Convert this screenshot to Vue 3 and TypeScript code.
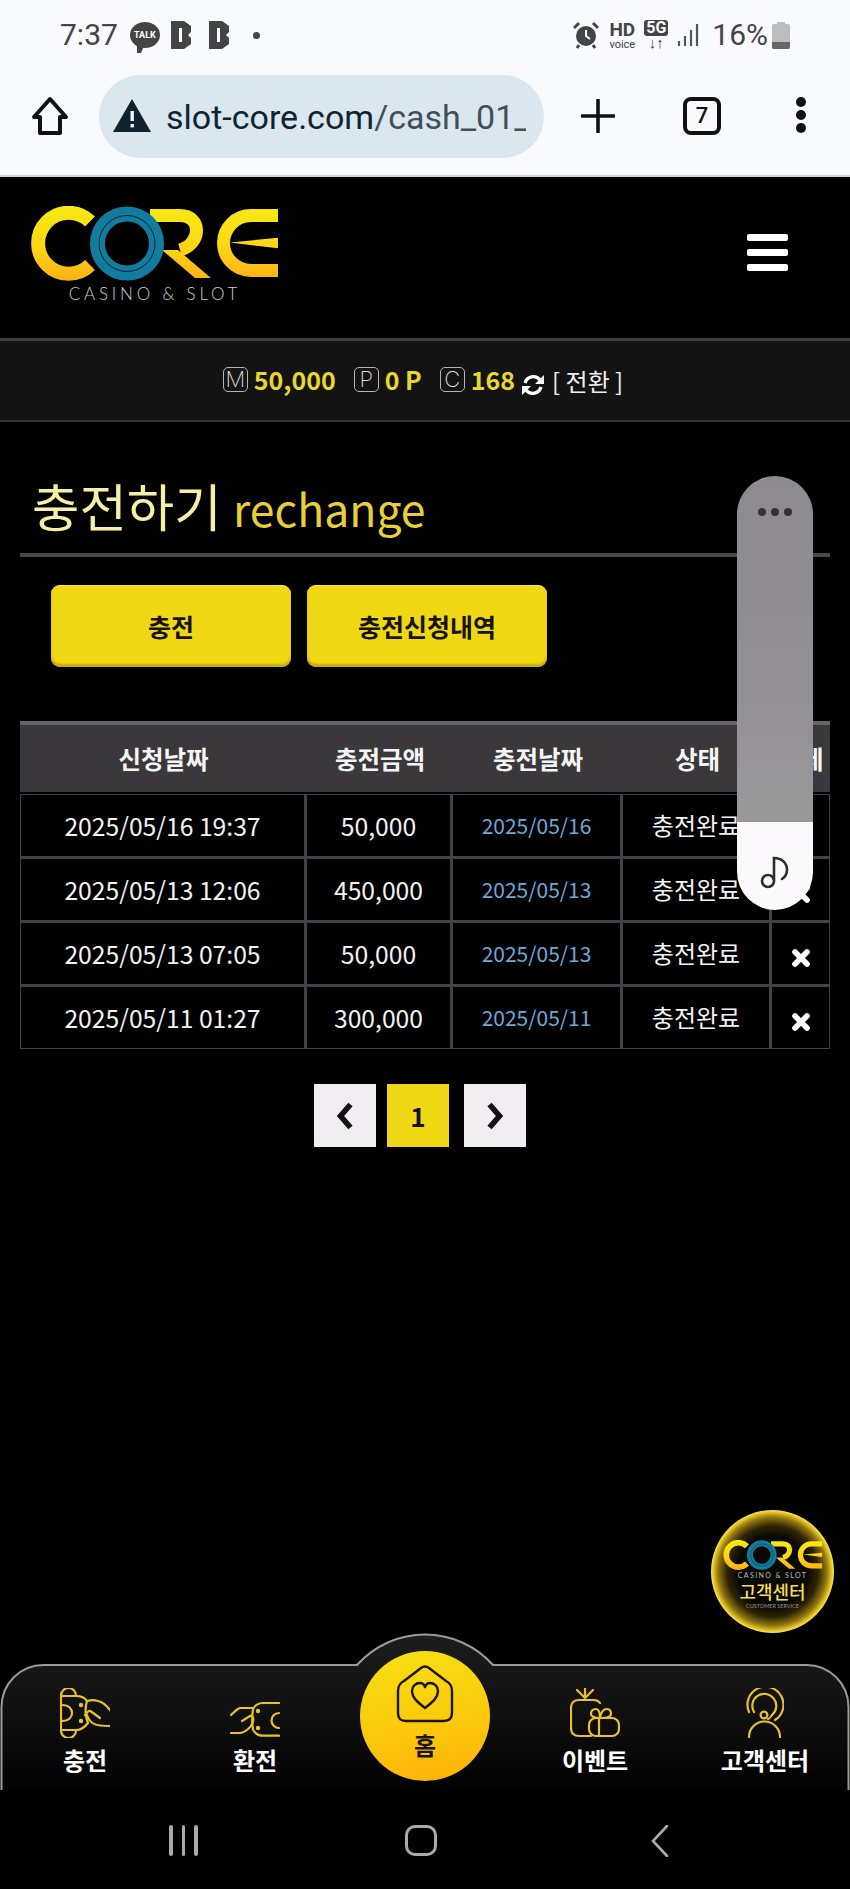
<script setup lang="ts">
interface ChargeRow {
  requested: string;
  amount: string;
  charged: string;
  status: string;
}

const rows: ChargeRow[] = [
  { requested: '2025/05/16 19:37', amount: '50,000', charged: '2025/05/16', status: '충전완료' },
  { requested: '2025/05/13 12:06', amount: '450,000', charged: '2025/05/13', status: '충전완료' },
  { requested: '2025/05/13 07:05', amount: '50,000', charged: '2025/05/13', status: '충전완료' },
  { requested: '2025/05/11 01:27', amount: '300,000', charged: '2025/05/11', status: '충전완료' },
];

const balances = [
  { mark: 'M', value: '50,000' },
  { mark: 'P', value: '0 P' },
  { mark: 'C', value: '168' },
];
</script>

<template>
  <div class="page">
    <div class="status">
      <div class="status-left">
        <span class="clock">7:37</span>
        <span class="talk">TALK</span>
        <svg class="b-icon" viewBox="0 0 22 28"><path d="M1 0H14L21 5V11L18 14L21 17V23L14 28H1Z" fill="#444" /><rect x="9" y="7" width="3" height="14" fill="#f8fafe" /></svg>
        <svg class="b-icon second" viewBox="0 0 22 28"><path d="M1 0H14L21 5V11L18 14L21 17V23L14 28H1Z" fill="#444" /><rect x="9" y="7" width="3" height="14" fill="#f8fafe" /></svg>
        <span class="dot"></span>
      </div>
      <div class="status-right">
        <svg class="alarm" viewBox="0 0 26 28">
          <circle cx="13" cy="15" r="10" fill="#444" />
          <path d="M13 9V15L17 18" fill="none" stroke="#f8fafe" stroke-width="2" />
          <path d="M1 7L6 2M25 7L20 2M6 24L4 27M20 24L22 27" stroke="#444" stroke-width="3" />
        </svg>
        <span class="hd"><b>HD</b><i>voice</i></span>
        <span class="fiveg"><b>5G</b><i>↓↑</i></span>
        <svg class="signal" viewBox="0 0 22 24"><path d="M2 18V23M8 13V23M14 7V23M20 1V23" stroke="#555" stroke-width="2.2" /></svg>
        <span class="percent">16%</span>
        <svg class="battery" viewBox="0 0 18 27"><path d="M5 0H13V2H16Q18 2 18 4V25Q18 27 16 27H2Q0 27 0 25V4Q0 2 2 2H5Z" fill="#bdbdbd" /><path d="M0 20H18V25Q18 27 16 27H2Q0 27 0 25Z" fill="#666" /></svg>
      </div>
    </div>

    <div class="browser">
      <svg class="home-glyph" viewBox="0 0 38 40">
        <path d="M19 3L35 21H29V37H9V21H3Z" fill="none" stroke="#111" stroke-width="4" stroke-linejoin="round" />
      </svg>
      <div class="url">
        <svg class="warn" viewBox="0 0 38 33">
          <path d="M19 0L38 33H0Z" fill="#10222e" />
          <rect x="17.5" y="12" width="3.4" height="10" fill="#f0f4f6" />
          <rect x="17.5" y="25" width="3.4" height="3.4" fill="#f0f4f6" />
        </svg>
        <span class="url-text"><b>slot-core.com</b>/cash_01_1</span>
      </div>
      <svg class="plus" viewBox="0 0 34 34"><path d="M17 1V33M1 17H33" stroke="#111" stroke-width="3.6" stroke-linecap="round" /></svg>
      <span class="tabs">7</span>
      <span class="kebab"><i></i><i></i><i></i></span>
    </div>

    <header class="site-head">
      <div class="brand">
        <svg class="core-logo" viewBox="0 0 250 75">
          <defs>
            <linearGradient id="coreGold" gradientUnits="userSpaceOnUse" x1="0" y1="0" x2="0" y2="75">
              <stop offset="0" stop-color="#f8ea12" />
              <stop offset="0.55" stop-color="#fbd615" />
              <stop offset="1" stop-color="#fdb014" />
            </linearGradient>
            <symbol id="coreMark" viewBox="0 0 250 75">
              <g fill="none" stroke="url(#coreGold)" stroke-width="13">
                <path d="M60 15.5A30.5 30.5 0 1 0 60 59" stroke-width="14" />
                <path d="M120 9.5H150C172 9.5 172 38 150 44" />
                <path d="M248 9.5H221A27.5 27.5 0 0 0 221 64.5H248" />
              </g>
              <path d="M132 44H148L181 72H165Z" fill="url(#coreGold)" />
              <path d="M200 36.5L248 31.7V42.3Z" fill="url(#coreGold)" />
              <circle cx="97" cy="37.5" r="29.5" fill="none" stroke="#127c9e" stroke-width="15" />
              <circle cx="97" cy="37.5" r="28" fill="none" stroke="#07222c" stroke-width="1" />
            </symbol>
          </defs>
          <use href="#coreMark" />
        </svg>
        <span class="brand-sub">CASINO &amp; SLOT</span>
      </div>
      <div class="burger"><i></i><i></i><i></i></div>
    </header>

    <div class="balance">
      <span v-for="b in balances" :key="b.mark" class="balance-item">
        <span class="mark">{{ b.mark }}</span>
        <strong>{{ b.value }}</strong>
      </span>
      <svg class="refresh" viewBox="0 0 24 24">
        <path d="M4 10A8.5 8.5 0 0 1 19 7M20 14A8.5 8.5 0 0 1 5 17" fill="none" stroke="#fff" stroke-width="3.4" />
        <path d="M23 2V11H14ZM1 22V13H10Z" fill="#fff" />
      </svg>
      <span class="swap">[ 전환 ]</span>
    </div>

    <main class="content">
      <h1 class="title">충전하기 <span>rechange</span></h1>
      <div class="tab-buttons">
        <button class="tab-btn">충전</button>
        <button class="tab-btn">충전신청내역</button>
      </div>

      <table class="history">
        <colgroup>
          <col style="width: 287px" />
          <col style="width: 146px" />
          <col style="width: 170px" />
          <col style="width: 149px" />
          <col style="width: 58px" />
        </colgroup>
        <thead>
          <tr>
            <th>신청날짜</th>
            <th>충전금액</th>
            <th>충전날짜</th>
            <th>상태</th>
            <th>삭제</th>
          </tr>
        </thead>
        <tbody>
          <tr v-for="row in rows" :key="row.requested">
            <td class="num">{{ row.requested }}</td>
            <td class="num">{{ row.amount }}</td>
            <td class="charged">{{ row.charged }}</td>
            <td>{{ row.status }}</td>
            <td>
              <svg class="remove" viewBox="0 0 18 18"><path d="M3 3L15 15M15 3L3 15" stroke="#fff" stroke-width="5.6" stroke-linecap="round" /></svg>
            </td>
          </tr>
        </tbody>
      </table>

      <div class="pager">
        <span class="page-btn">
          <svg viewBox="0 0 20 30"><path d="M15.5 3.5L5.5 15L15.5 26.5" fill="none" stroke="#111" stroke-width="5.6" /></svg>
        </span>
        <span class="page-btn current">1</span>
        <span class="page-btn last">
          <svg viewBox="0 0 20 30"><path d="M4.5 3.5L14.5 15L4.5 26.5" fill="none" stroke="#111" stroke-width="5.6" /></svg>
        </span>
      </div>
    </main>

    <nav class="bottom-nav">
      <svg class="nav-shape" viewBox="0 0 850 157" preserveAspectRatio="none">
        <defs>
          <linearGradient id="navFill" x1="0" y1="0" x2="0" y2="1">
            <stop offset="0" stop-color="#1d1d1d" />
            <stop offset="0.45" stop-color="#111" />
            <stop offset="1" stop-color="#020202" />
          </linearGradient>
        </defs>
        <path
          d="M1.5 157V74A42 42 0 0 1 43.5 32H357C375 12 400 1.5 425 1.5C450 1.5 475 12 493 32H806.5A42 42 0 0 1 848.5 74V157"
          fill="url(#navFill)"
          stroke="#9c9c96"
          stroke-width="2"
        />
      </svg>
      <a class="nav-item">
        <svg class="nav-icon" viewBox="0 0 50 50" width="50" height="50">
          <g fill="none" stroke="#e8c12d" stroke-width="2.2" stroke-linecap="round" stroke-linejoin="round">
            <path d="M1 8V42M1 8V7.5A7.5 7.5 0 0 1 16 7.5V8M1 42V42.5A7.5 7.5 0 0 0 16 42.5V42" />
            <path d="M1 8H16C21 8 25 10 27 13C25 20 25 28 28 35C25 39 20 42 16 42H1" />
            <path d="M2 17C9 17 12 21 12 25C12 29 9 33 2 33" />
            <path d="M27 13C31 12 35 12 38 13C42 14 47 18 50 22" />
            <path d="M27 27C30 36 35 38 50 38" />
            <path d="M25 27C27 24 29 22 31 23.5L40 30" />
          </g>
          <circle cx="21" cy="17" r="2.2" fill="#e8c12d" />
          <circle cx="21" cy="33" r="2.2" fill="#e8c12d" />
        </svg>
        <span>충전</span>
      </a>
      <a class="nav-item">
        <svg class="nav-icon" viewBox="0 0 50 36" width="50" height="36">
          <g fill="none" stroke="#e8c12d" stroke-width="2.2" stroke-linecap="round" stroke-linejoin="round">
            <path d="M49 1H34C28 1 24 4 23 7.6C22 12 22 23 23 27.7C25 31 29 33.7 33 33.7H49" />
            <path d="M1 13C4 10 7 7 10 6H23" />
            <path d="M1 31H10C14 31 21 26 23 20C24 15 22 13 20 14L12 19" />
            <path d="M49 11A7.5 7.5 0 0 0 49 26" />
          </g>
          <circle cx="28" cy="9" r="2.2" fill="#e8c12d" />
          <circle cx="28" cy="26" r="2.2" fill="#e8c12d" />
        </svg>
        <span>환전</span>
      </a>
      <a class="nav-item home">
        <svg class="home-icon" viewBox="0 0 58 58" width="58" height="58">
          <path
            d="M8 16L25 3Q29 0 33 3L50 16Q56 19 56 26V48Q56 56 48 56H10Q2 56 2 48V26Q2 19 8 16Z"
            fill="none"
            stroke="#1b1408"
            stroke-width="2.4"
          />
          <path
            d="M29 43C20 36 16 32 16 26C16 21 20 18 24 18C26 18 28 19 29 22C30 19 32 18 34 18C38 18 42 21 42 26C42 32 38 36 29 43Z"
            fill="none"
            stroke="#1b1408"
            stroke-width="2.4"
            stroke-linejoin="round"
          />
        </svg>
        <span>홈</span>
      </a>
      <a class="nav-item">
        <svg class="nav-icon" viewBox="0 0 50 50" width="50" height="50">
          <g fill="none" stroke="#e8c12d" stroke-width="2.2" stroke-linecap="round" stroke-linejoin="round">
            <path d="M15 10L7 2M15 10V0M15 10L23 2" />
            <path d="M30 15C28 12 26 12 24 12H9C4 12 1 15 1 20V40C1 45 4 48 9 48H21" />
            <rect x="19" y="30" width="30" height="18" rx="7" />
            <path d="M29 30V48" />
            <path d="M29 30C22 30 21 27 21 26C21 22 24 21 26 21C29 21 30 24 30 30C31 24 33 21 37 21C39 21 41 22 41 26C41 27 40 30 33 30" />
          </g>
        </svg>
        <span>이벤트</span>
      </a>
      <a class="nav-item">
        <svg class="nav-icon" viewBox="0 0 38 50" width="38" height="50">
          <g fill="none" stroke="#e8c12d" stroke-width="2.2" stroke-linecap="round">
            <path d="M3 24A18 18 0 1 1 29 32" />
            <path d="M8 24A12 12 0 1 1 26 27C24 30 23 31 22 31" />
            <circle cx="18" cy="27" r="3.4" />
            <path d="M3 49A15.5 15.5 0 0 1 34 49" />
          </g>
        </svg>
        <span>고객센터</span>
      </a>
    </nav>

    <div class="system-nav">
      <span class="recents"><i></i><i></i><i></i></span>
      <span class="sys-home"></span>
      <svg class="sys-back" viewBox="0 0 18 32"><path d="M16 1L2 16L16 31" fill="none" stroke="#aaa" stroke-width="2.6" stroke-linecap="round" /></svg>
    </div>

    <aside class="sound-pill">
      <div class="pill-top"><i></i><i></i><i></i></div>
      <div class="pill-bottom">
        <svg viewBox="0 0 30 34" width="30" height="34">
          <circle cx="8" cy="26" r="6" fill="none" stroke="#2d2d2d" stroke-width="2.6" />
          <path d="M14 25V3C22 3 27 8 27 15C27 19 25 22 22 24" fill="none" stroke="#2d2d2d" stroke-width="2.6" stroke-linecap="round" />
        </svg>
      </div>
    </aside>

    <aside class="help-badge">
      <svg class="help-logo" viewBox="0 0 250 75"><use href="#coreMark" /></svg>
      <span class="help-sub">CASINO &amp; SLOT</span>
      <strong>고객센터</strong>
      <span class="help-en">CUSTOMER SERVICE</span>
    </aside>
  </div>
</template>

<style>
html,
body {
  margin: 0;
  background: #000;
}
</style>

<style scoped>
.page {
  position: relative;
  width: 850px;
  height: 1889px;
  overflow: hidden;
  display: flex;
  flex-direction: column;
  background: #000;
  font-family: 'Noto Sans CJK KR', 'Noto Sans', sans-serif;
  color: #f2f2f2;
}

/* phone chrome */
.status {
  height: 66px;
  flex: none;
  background: #f8fafe;
  display: flex;
  align-items: flex-end;
  justify-content: space-between;
  padding: 0 60px 16px;
  box-sizing: border-box;
}
.status-left,
.status-right {
  display: flex;
  align-items: center;
  height: 30px;
}
.clock,
.percent {
  font-family: Roboto, sans-serif;
  font-size: 30px;
  color: #444;
  line-height: 30px;
}
.talk {
  position: relative;
  width: 30px;
  height: 26px;
  margin-left: 12px;
  border-radius: 50%;
  background: #444;
  color: #fff;
  font: 700 9px/26px Roboto, sans-serif;
  text-align: center;
}
.talk::after {
  content: '';
  position: absolute;
  left: 7px;
  bottom: -5px;
  border-left: 4px solid #444;
  border-right: 3px solid transparent;
  border-top: 7px solid #444;
}
.b-icon {
  width: 22px;
  height: 28px;
  margin-left: 10px;
}
.b-icon.second {
  margin-left: 16px;
}
.dot {
  width: 7px;
  height: 7px;
  border-radius: 50%;
  background: #444;
  margin-left: 23px;
}
.status-right {
  margin-right: 0;
}
.alarm {
  width: 26px;
  height: 28px;
}
.hd {
  display: flex;
  flex-direction: column;
  align-items: center;
  margin-left: 10px;
  color: #444;
  font-family: Roboto, sans-serif;
  line-height: 1;
}
.hd b {
  font-size: 19px;
}
.hd i {
  font-style: normal;
  font-size: 11px;
}
.fiveg {
  display: flex;
  flex-direction: column;
  align-items: center;
  margin-left: 9px;
  font-family: Roboto, sans-serif;
  color: #444;
  line-height: 1;
}
.fiveg b {
  background: #444;
  color: #f8fafe;
  font-size: 16px;
  padding: 0 2px;
  border-radius: 3px;
}
.fiveg i {
  font-style: normal;
  font-size: 15px;
}
.signal {
  width: 22px;
  height: 24px;
  margin-left: 9px;
}
.percent {
  margin-left: 13px;
}
.battery {
  width: 18px;
  height: 27px;
  margin-left: 4px;
}
.browser {
  height: 111px;
  flex: none;
  box-sizing: border-box;
  background: #f8fafe;
  border-bottom: 2px solid #d4d4d6;
  display: flex;
  align-items: flex-start;
  padding-top: 9px;
  position: relative;
}
.home-glyph {
  width: 38px;
  height: 40px;
  margin: 21px 0 0 31px;
}
.url {
  width: 445px;
  height: 83px;
  margin-left: 30px;
  border-radius: 42px;
  background: #dbe7ee;
  display: flex;
  align-items: center;
  overflow: hidden;
  box-sizing: border-box;
  padding: 0 18px 0 14px;
}
.warn {
  width: 38px;
  height: 33px;
  flex: none;
  margin-bottom: 3px;
}
.url-text {
  margin-left: 15px;
  font-family: Roboto, sans-serif;
  font-size: 34px;
  color: #42505a;
  white-space: nowrap;
  overflow: hidden;
}
.url-text b {
  font-weight: 400;
  color: #0f2330;
}
.plus {
  width: 34px;
  height: 34px;
  margin: 24px 0 0 37px;
}
.tabs {
  width: 38px;
  height: 38px;
  margin: 22px 0 0 68px;
  box-sizing: border-box;
  border: 4px solid #111;
  border-radius: 8px;
  font: 500 22px/30px Roboto, sans-serif;
  color: #111;
  text-align: center;
}
.kebab {
  display: flex;
  flex-direction: column;
  gap: 3px;
  margin: 22px 0 0 75px;
}
.kebab i {
  width: 10px;
  height: 10px;
  border-radius: 50%;
  background: #111;
}

/* site header */
.site-head {
  height: 161px;
  flex: none;
  display: flex;
  justify-content: space-between;
  padding: 29px 62px 0 30px;
  box-sizing: border-box;
}
.brand {
  display: flex;
  flex-direction: column;
  align-items: center;
  width: 250px;
}
.core-logo {
  width: 250px;
  height: 75px;
  display: block;
}
.brand-sub {
  font-family: Lato, sans-serif;
  font-weight: 300;
  font-size: 17px;
  letter-spacing: 3.8px;
  line-height: 20px;
  margin-top: 3px;
  color: #cfcfcf;
}
.burger {
  display: flex;
  flex-direction: column;
  gap: 8px;
  margin-top: 28px;
}
.burger i {
  width: 41px;
  height: 7px;
  border-radius: 2px;
  background: #fff;
}
.balance {
  height: 84px;
  flex: none;
  box-sizing: border-box;
  border-top: 3px solid #3c3b3d;
  border-bottom: 2px solid #333234;
  background: #141314;
  display: flex;
  align-items: center;
  justify-content: center;
  padding-right: 4px;
}
.balance-item {
  display: flex;
  align-items: center;
  margin-right: 18px;
  margin-bottom: 3px;
}
.balance-item:nth-child(3) {
  margin-right: 6px;
}
.mark {
  width: 25px;
  height: 25px;
  box-sizing: border-box;
  border: 1.5px solid #b5b5b5;
  border-radius: 5px;
  font: 200 22px/22px Inter, sans-serif;
  color: #ddd;
  text-align: center;
  margin-right: 6px;
}
.balance strong {
  font-size: 25px;
  line-height: 30px;
  color: #e8d72e;
  font-weight: 700;
}
.refresh {
  width: 24px;
  height: 24px;
  margin-top: 9px;
}
.swap {
  margin-left: 7px;
  font-size: 24px;
  color: #eee;
  line-height: 30px;
}

/* content */
.content {
  flex: 1;
  min-height: 0;
  padding: 0 20px;
}
.title {
  margin: 0;
  padding: 47px 0 9px 12px;
  border-bottom: 4px solid #4a484b;
  font-size: 51.5px;
  font-weight: 400;
  line-height: 72px;
  color: #f6efa6;
}
.title span {
  font-size: 44.5px;
  color: #e6cf3a;
}
.tab-buttons {
  display: flex;
  gap: 16px;
  padding: 28px 0 0 31px;
}
.tab-btn {
  width: 240px;
  height: 82px;
  border: none;
  border-radius: 9px;
  background: #f0d714;
  box-shadow: inset 0 -3px 2px #c9a90f, inset 0 1px 1px #f8e548;
  color: #15120a;
  font-family: inherit;
  font-size: 25px;
  font-weight: 700;
  padding: 0;
}
.history {
  width: 810px;
  margin-top: 54px;
  table-layout: fixed;
  border-collapse: separate;
  border-spacing: 0;
}
.history th {
  height: 67px;
  padding: 0;
  background: #3a383a;
  border-top: 4px solid #666467;
  border-bottom: 2px solid #000;
  font-size: 24.5px;
  font-weight: 700;
  color: #f5f5f5;
}
.history td {
  height: 59px;
  padding: 0 0 2px;
  text-align: center;
  border-right: 3px solid #444244;
  border-bottom: 3px solid #444244;
  font-size: 24px;
  color: #f2f2f2;
}
.history tbody tr:first-child td {
  border-top: 1px solid #444244;
}
.history td:first-child {
  border-left: 1px solid #444244;
}
.history td:last-child {
  border-right: 1px solid #444244;
}
.history tbody tr:last-child td {
  border-bottom-width: 1px;
}
.history td.num {
  font-size: 24.7px;
}
.history td.charged {
  font-size: 21px;
  color: #6fa8d8;
}
.remove {
  width: 18px;
  height: 18px;
  vertical-align: -4px;
}
.pager {
  display: flex;
  justify-content: center;
  gap: 11px;
  margin-top: 35px;
  padding-right: 10px;
}
.page-btn {
  width: 62px;
  height: 63px;
  background: #f0eef0;
  color: #111;
  font-size: 26px;
  font-weight: 700;
  display: flex;
  align-items: center;
  justify-content: center;
}
.page-btn svg {
  width: 20px;
  height: 30px;
}
.page-btn.current {
  background: #f0d714;
}
.page-btn.last {
  margin-left: 4px;
}

/* bottom navigation */
.bottom-nav {
  position: relative;
  height: 157px;
  flex: none;
  display: grid;
  grid-template-columns: repeat(5, 170px);
  background: #000;
}
.nav-shape {
  position: absolute;
  inset: 0;
  width: 850px;
  height: 157px;
}
.nav-item {
  position: relative;
  display: flex;
  flex-direction: column;
  align-items: center;
  justify-content: flex-end;
  padding-bottom: 13px;
  color: #fff;
  font-size: 24px;
  font-weight: 700;
  line-height: 34px;
}
.nav-icon {
  display: block;
  margin-bottom: 5px;
}
.nav-item.home {
  width: 130px;
  height: 130px;
  margin: 18px 0 0 20px;
  box-sizing: border-box;
  padding: 14px 0 0;
  justify-content: flex-start;
  border-radius: 50%;
  background: linear-gradient(170deg, #f6e112 0%, #fcc70c 60%, #ffb008 100%);
  color: #1b1408;
  line-height: 32px;
}
.home-icon {
  display: block;
  margin-bottom: 6px;
}
.system-nav {
  height: 99px;
  flex: none;
  background: #000;
  display: flex;
  align-items: flex-start;
  padding: 35px 0 0 169px;
  box-sizing: border-box;
}
.recents {
  display: flex;
  gap: 9px;
}
.recents i {
  width: 3.5px;
  height: 31px;
  border-radius: 2px;
  background: #aaa;
}
.sys-home {
  width: 26px;
  height: 25px;
  margin-left: 207px;
  border: 3px solid #aaa;
  border-radius: 10px;
}
.sys-back {
  width: 18px;
  height: 32px;
  margin-left: 214px;
}

/* overlays */
.sound-pill {
  position: absolute;
  left: 737px;
  top: 476px;
  width: 76px;
  height: 434px;
  border-radius: 38px;
  overflow: hidden;
  display: flex;
  flex-direction: column;
}
.pill-top {
  flex: 1;
  background: linear-gradient(#8e8b8f, #918f92 60%, #9a999a);
  display: flex;
  justify-content: center;
  gap: 5px;
  padding-top: 32px;
}
.pill-top i {
  width: 8px;
  height: 8px;
  border-radius: 50%;
  background: #333;
}
.pill-bottom {
  height: 88px;
  flex: none;
  background: #fbf9fb;
  display: flex;
  justify-content: center;
  padding-top: 33px;
  box-sizing: border-box;
}
.help-badge {
  position: absolute;
  left: 711px;
  top: 1510px;
  width: 123px;
  height: 123px;
  border-radius: 50%;
  box-sizing: border-box;
  background: radial-gradient(circle closest-side, #0a0803 0%, #0a0803 58%, #2e2404 74%, #8f7410 88%, #e2c21f 96%, #f8e870 100%);
  display: flex;
  flex-direction: column;
  align-items: center;
  padding-top: 30px;
}
.help-logo {
  width: 100px;
  height: 30px;
  display: block;
}
.help-sub {
  font-family: Lato, sans-serif;
  font-size: 7px;
  letter-spacing: 1.4px;
  line-height: 9px;
  margin-top: 1px;
  color: #bbb;
}
.help-badge strong {
  font-size: 18px;
  line-height: 22px;
  font-weight: 500;
  color: #f0dd58;
}
.help-en {
  font-family: Lato, sans-serif;
  font-size: 5.5px;
  line-height: 8px;
  color: #999;
}
</style>
